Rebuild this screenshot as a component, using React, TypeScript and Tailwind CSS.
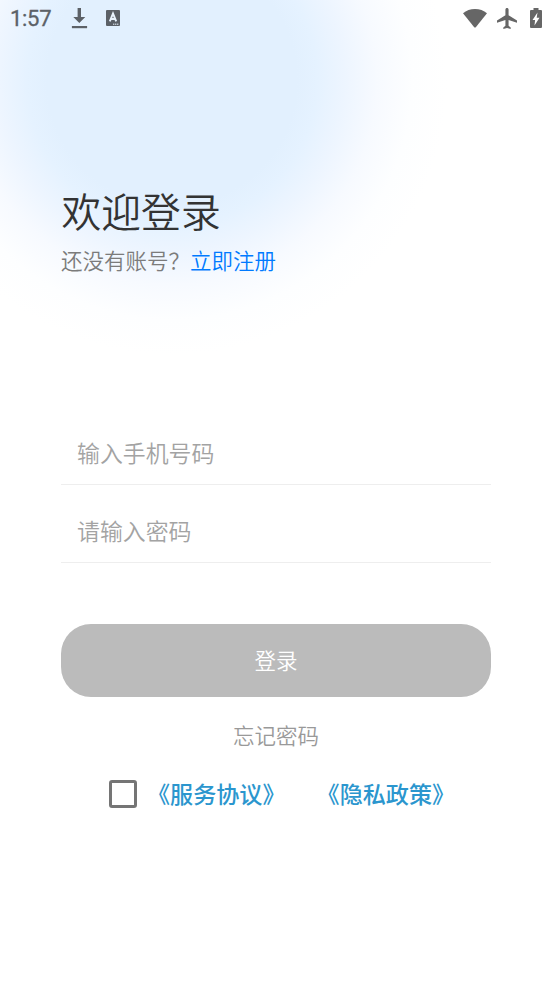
import { useState } from 'react';

function StatusBar() {
  return (
    <header className="flex h-9 items-center justify-between pl-[10px] pr-[10px] text-[#5c6167]">
      <div className="flex h-full items-center">
        <span className="w-[61px] pt-[2px] font-[Roboto,sans-serif] text-[22px] leading-none font-normal tracking-[-0.3px] [-webkit-text-stroke:0.3px_#5c6167]">
          1:57
        </span>
        <svg className="h-[22px] w-[17px]" viewBox="0 0 17 22" fill="currentColor">
          <path d="M6.6 1h3.4v9h4.3l-6 6-6-6h4.3z" />
          <path d="M.9 19h15.2v2.2H.9z" />
        </svg>
        <svg className="ml-[18px] h-4 w-[14px]" viewBox="0 0 14 16" fill="none" stroke="#eaf4fe">
          <rect width="14" height="16" rx="1" fill="#5c6167" stroke="none" />
          <path d="M3.8 11.4 7 3.6l3.2 7.8M4.9 9h4.2" strokeWidth="1.9" />
          <path d="M7 14.2h6" strokeWidth="1" strokeDasharray="1.4 .6" />
        </svg>
      </div>

      <div className="flex items-center text-[#666]">
        <svg className="h-[19px] w-6" viewBox="0 0 24 19" fill="currentColor">
          <path d="M0 4.2C3.3 1.5 7.4 0 12 0s8.7 1.5 12 4.2L13 18q-1 1.2-2 0z" />
        </svg>
        <svg className="mr-px ml-[10px] h-[21px] w-5" viewBox="2 2 19 20" preserveAspectRatio="none" fill="currentColor">
          <path d="M21 16v-2l-8-5V3.5c0-.83-.67-1.5-1.5-1.5S10 2.67 10 3.5V9l-8 5v2l8-2.5V19l-2 1.5V22l3.5-1 3.5 1v-1.5L13 19v-5.5z" />
        </svg>
        <svg className="ml-3 h-5 w-3" viewBox="0 0 12 20" fill="currentColor">
          <path d="M3.5 0h5v2H11q1 0 1 1v16q0 1-1 1H1q-1 0-1-1V3q0-1 1-1h2.5z" />
          <path d="M7.5 4.5 2.5 12h2.6L4.5 17.5 9.5 9.8H6.7z" fill="#fff" />
        </svg>
      </div>
    </header>
  );
}

export default function App() {
  const [agreed, setAgreed] = useState(false);

  return (
    <div className="min-h-[981px] w-full bg-white bg-[radial-gradient(circle_at_172px_80px,#e2f0fe_0px,#e2f0fe_125px,#e5f2ff_145px,#edf5ff_172px,#f7faff_205px,#fdfeff_240px,#ffffff_275px)] font-['Noto_Sans_CJK_SC',sans-serif] font-[350]">
      <StatusBar />

      <main className="flex flex-col px-[61px] pt-[149px]">
        <h1 className="ml-[0.5px] h-[50px] text-[39.8px] leading-[50px] text-[#333]">欢迎登录</h1>
        <p className="mt-[9px] h-8 text-[21.5px] leading-8 text-[#7b7b7b]">
          还没有账号？
          <a href="#register" className="text-[#007aff]">立即注册</a>
        </p>

        <form className="mt-[131px] flex flex-col" onSubmit={(e) => e.preventDefault()}>
          <input
            type="tel"
            placeholder="输入手机号码"
            className="h-[78px] border-b border-[#eee] bg-transparent px-4 pt-[13px] text-[22.9px] outline-none placeholder:text-[#a3a3a3]"
          />
          <input
            type="password"
            placeholder="请输入密码"
            className="h-[78px] border-b border-[#eee] bg-transparent px-4 pt-[13px] text-[22.9px] outline-none placeholder:text-[#a3a3a3]"
          />
          <button className="mt-[61px] h-[73px] rounded-[30px] bg-[#bbb] text-[21.5px] text-white">
            登录
          </button>
        </form>

        <a href="#forgot" className="mt-[22px] self-center text-[21.5px] leading-8 text-[#999]">
          忘记密码
        </a>

        <div className="mt-[26px] ml-12 flex items-center">
          <button
            role="checkbox"
            aria-checked={agreed}
            onClick={() => setAgreed(!agreed)}
            className="mt-px size-7 shrink-0 rounded-[3px] border-3 border-[#757575] aria-checked:bg-[#757575]"
          />
          <div className="ml-[10px] flex gap-[31px] text-[23.1px] leading-8 font-medium whitespace-nowrap text-[#2b96ce]">
            <a href="#terms">《服务协议》</a>
            <a href="#privacy">《隐私政策》</a>
          </div>
        </div>
      </main>
    </div>
  );
}
